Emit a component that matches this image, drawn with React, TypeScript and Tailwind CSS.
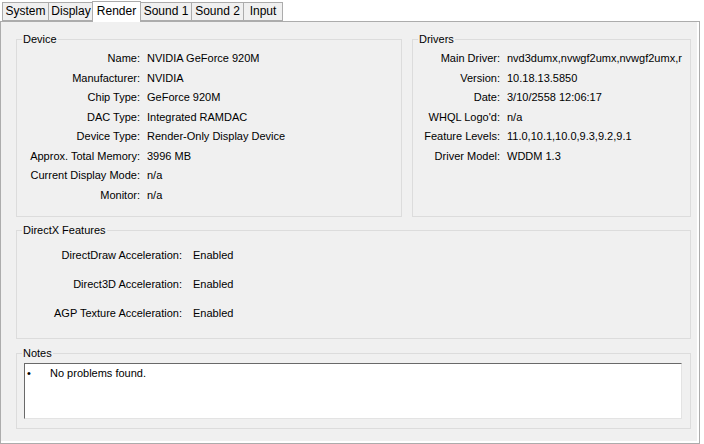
import React from "react";

const tabs = ["System", "Display", "Render", "Sound 1", "Sound 2", "Input"];
const tabW = [46, 45, 49, 51, 52, 40];

const device: [string, string][] = [
  ["Name:", "NVIDIA GeForce 920M"],
  ["Manufacturer:", "NVIDIA"],
  ["Chip Type:", "GeForce 920M"],
  ["DAC Type:", "Integrated RAMDAC"],
  ["Device Type:", "Render-Only Display Device"],
  ["Approx. Total Memory:", "3996 MB"],
  ["Current Display Mode:", "n/a"],
  ["Monitor:", "n/a"],
];

const drivers: [string, string][] = [
  ["Main Driver:", "nvd3dumx,nvwgf2umx,nvwgf2umx,r"],
  ["Version:", "10.18.13.5850"],
  ["Date:", "3/10/2558 12:06:17"],
  ["WHQL Logo'd:", "n/a"],
  ["Feature Levels:", "11.0,10.1,10.0,9.3,9.2,9.1"],
  ["Driver Model:", "WDDM 1.3"],
];

const features: [string, string][] = [
  ["DirectDraw Acceleration:", "Enabled"],
  ["Direct3D Acceleration:", "Enabled"],
  ["AGP Texture Acceleration:", "Enabled"],
];

function Legend({ title }: { title: string }) {
  return (
    <div className="-mt-[7px] h-[13px] leading-[13px] flex">
      <span className="ml-[5px] px-[1px] bg-[#f0f0f0]">{title}</span>
    </div>
  );
}

export default function App() {
  return (
    <div
      className="w-[704px] h-[444px] bg-white text-black text-[11px] leading-[13px] overflow-hidden"
      style={{ fontFamily: '"Liberation Sans", Arial, sans-serif' }}
    >
      {/* tabs */}
      <div className="flex items-end h-[21px] pl-[2px] relative z-10">
        {tabs.map((t, i) => {
          const active = t === "Render";
          return (
            <div
              key={t}
              style={{ width: tabW[i] }}
              className={
                active
                  ? "h-[21px] -mb-[1px] bg-white border border-b-0 border-[#acacac] flex items-center justify-center pb-[2px] text-[12px] -mx-[1px] relative z-10"
                  : "h-[19px] bg-[#f0f0f0] border border-[#acacac] border-r-0 last:border-r flex items-center justify-center text-[12px]"
              }
            >
              {t}
            </div>
          );
        })}
      </div>
      {/* panel */}
      <div className="w-[700px] h-[423px] border border-[#acacac] bg-white pr-[2px] pb-[2px]">
        <div className="h-full bg-[#f0f0f0] pl-[15px] pt-[17px] flex flex-col">
          <div className="flex gap-[10px]">
            {/* Device */}
            <div className="w-[386px] h-[178px] border border-[#dcdcdc]">
              <Legend title="Device" />
              <div className="pt-[3px] flex flex-col">
                {device.map(([k, v]) => (
                  <div key={k} className="h-[19.5px] flex items-center">
                    <span className="w-[123px] text-right whitespace-nowrap">{k}</span>
                    <span className="ml-[7px] whitespace-nowrap">{v}</span>
                  </div>
                ))}
              </div>
            </div>
            {/* Drivers */}
            <div className="w-[279px] h-[178px] border border-[#dcdcdc]">
              <Legend title="Drivers" />
              <div className="pt-[3px] flex flex-col">
                {drivers.map(([k, v]) => (
                  <div key={k} className="h-[19.5px] flex items-center">
                    <span className="w-[87px] shrink-0 text-right whitespace-nowrap">{k}</span>
                    <span className="ml-[7px] whitespace-nowrap">{v}</span>
                  </div>
                ))}
              </div>
            </div>
          </div>
          {/* DirectX Features */}
          <div className="mt-[13px] w-[675px] h-[109px] border border-[#dcdcdc]">
            <Legend title="DirectX Features" />
            <div className="pt-[4px] flex flex-col">
              {features.map(([k, v]) => (
                <div key={k} className="h-[29px] flex items-center">
                  <span className="w-[165px] text-right whitespace-nowrap">{k}</span>
                  <span className="ml-[11px] whitespace-nowrap">{v}</span>
                </div>
              ))}
            </div>
          </div>
          {/* Notes */}
          <div className="mt-[14px] w-[675px] h-[76px] border border-[#dcdcdc]">
            <Legend title="Notes" />
            <div className="mt-[3px] ml-[7px] w-[658px] h-[56px] bg-white border border-t-[#696969] border-l-[#696969] border-r-[#e3e3e3] border-b-[#e3e3e3]">
              <div className="flex items-center h-[16px] pt-[3px]">
                <span className="w-[25px] pl-[2px]">•</span>
                <span>No problems found.</span>
              </div>
            </div>
          </div>
        </div>
      </div>
    </div>
  );
}
